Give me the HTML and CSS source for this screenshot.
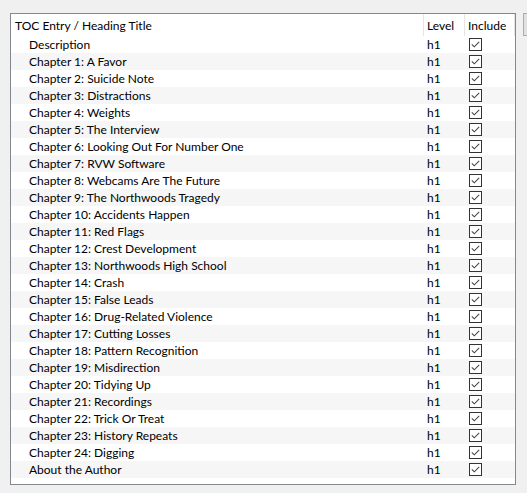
FILE: index.html
```html
<!DOCTYPE html>
<html>
<head>
<meta charset="utf-8">
<link rel="stylesheet" href="styles.css">
</head>
<body>
<div class="wrap">
  <div class="panel">
    <div class="head">
      <div class="c-title">TOC Entry / Heading Title</div>
      <div class="c-level">Level</div>
      <div class="c-inc">Include</div>
    </div>
    <div class="rows" id="rows"></div>
  </div>
  <div class="side"></div>
</div>
<script>
var items = ["Description","Chapter 1: A Favor","Chapter 2: Suicide Note","Chapter 3: Distractions","Chapter 4: Weights","Chapter 5: The Interview","Chapter 6: Looking Out For Number One","Chapter 7: RVW Software","Chapter 8: Webcams Are The Future","Chapter 9: The Northwoods Tragedy","Chapter 10: Accidents Happen","Chapter 11: Red Flags","Chapter 12: Crest Development","Chapter 13: Northwoods High School","Chapter 14: Crash","Chapter 15: False Leads","Chapter 16: Drug-Related Violence","Chapter 17: Cutting Losses","Chapter 18: Pattern Recognition","Chapter 19: Misdirection","Chapter 20: Tidying Up","Chapter 21: Recordings","Chapter 22: Trick Or Treat","Chapter 23: History Repeats","Chapter 24: Digging","About the Author"];
var check = '<svg width="13" height="13" viewBox="0 0 13 13"><rect x="0.5" y="0.5" width="12" height="12" fill="#fff" stroke="#333"/><path d="M2.8 6.3 L5.3 8.8 L10.2 3.9" fill="none" stroke="#444" stroke-width="1.05"/></svg>';
var html = "";
items.forEach(function(t){
  html += '<div class="row"><div class="c-title t">' + t + '</div><div class="c-level">h1</div><div class="c-inc">' + check + '</div></div>';
});
document.getElementById("rows").innerHTML = html;
</script>
</body>
</html>
```
FILE: styles.css
```css
html, body {
  margin: 0;
  padding: 0;
  background: #f0f0f0;
  width: 527px;
  height: 493px;
  overflow: hidden;
}
body {
  font-family: Lato, "Noto Sans", sans-serif;
  font-size: 12px;
  color: #000;
}
.wrap {
  display: flex;
  padding: 13px 0 0 10px;
  gap: 7px;
}
.panel {
  width: 506px;
  height: 472px;
  border: 1px solid #828790;
  background: #fff;
  box-sizing: border-box;
}
.head {
  display: flex;
  height: 22px;
  align-items: center;
}
.head > div {
  height: 100%;
  display: flex;
  align-items: center;
  box-sizing: border-box;
}
.head .c-title { padding-left: 4px; }
.head .c-level { border-left: 1px solid #e5e5e5; padding-left: 3px; }
.head .c-inc { border-left: 1px solid #e5e5e5; border-right: 1px solid #e5e5e5; padding-left: 3px; }
.c-title { width: 412px; flex: none; }
.c-level { width: 41px; flex: none; }
.c-inc { width: 51px; flex: none; }
.row {
  display: flex;
  height: 17px;
  align-items: center;
}
.row:nth-child(even) { background: #f6f6f6; }
.row .t { padding-left: 18px; box-sizing: border-box; }
.row .c-level { padding-left: 4px; box-sizing: border-box; }
.row .c-inc { padding-left: 5px; display: flex; align-items: center; box-sizing: border-box; }
.row svg { display: block; }
.side {
  width: 10px;
  height: 21px;
  border-left: 1px solid #adadad;
  border-top: 1px solid #adadad;
  border-bottom: 1px solid #adadad;
  background: #e1e1e1;
}
```
